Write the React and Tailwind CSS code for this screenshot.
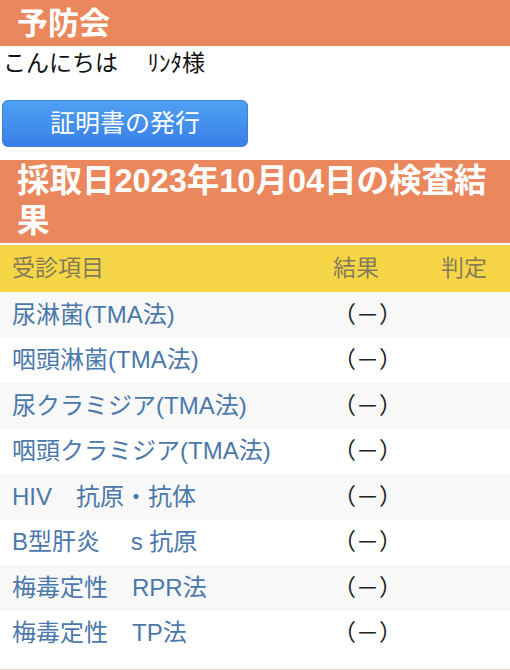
import React from "react";

const rows = [
  "尿淋菌(TMA法)",
  "咽頭淋菌(TMA法)",
  "尿クラミジア(TMA法)",
  "咽頭クラミジア(TMA法)",
  "HIV　抗原・抗体",
  "B型肝炎　 s 抗原",
  "梅毒定性　RPR法",
  "梅毒定性　TP法",
];

export default function App() {
  return (
    <div
      className="w-[510px] h-[670px] bg-white overflow-hidden flex flex-col"
      style={{ fontFamily: '"Liberation Sans", "Noto Sans CJK JP", sans-serif' }}
    >
      <div className="h-[46px] bg-[#eb875c] flex items-center pl-[17px] shrink-0">
        <span className="text-white font-bold text-[31px] leading-none">予防会</span>
      </div>
      <div className="pl-[3px] text-[23px] leading-[34px] text-[#111] whitespace-pre">
        {"こんにちは　 ﾘﾝﾀ様"}
      </div>
      <div className="mt-[20px] ml-[2px] w-[246px] h-[47px] rounded-[6px] border border-[#3d7fdc] bg-gradient-to-b from-[#4fa0f2] to-[#3a7fe9] flex items-center justify-center shrink-0">
        <span className="text-white text-[25px] leading-none">証明書の発行</span>
      </div>
      <div className="mt-[13px] bg-[#eb875c] pl-[17px] pt-[1px] pb-[2px] text-white font-bold text-[32.5px] leading-[40px] shrink-0 whitespace-nowrap">
        採取日2023年10月04日の検査結
        <br />果
      </div>
      <div className="mt-[2px] h-[47px] bg-[#f6d647] grid grid-cols-[321px_108px_1fr] items-center pl-[12px] text-[23px] text-[#857b57] shrink-0">
        <span>受診項目</span>
        <span>結果</span>
        <span>判定</span>
      </div>
      {rows.map((r, i) => (
        <div
          key={i}
          className={
            "h-[45.5px] grid grid-cols-[321px_108px_1fr] items-center pl-[12px] shrink-0 " +
            (i % 2 === 0 ? "bg-[#f8f8f8]" : "bg-white")
          }
        >
          <span className="text-[#4a78ab] text-[24px] whitespace-pre">{r}</span>
          <span className="text-[#222] text-[23px]">（－）</span>
          <span></span>
        </div>
      ))}
      <div className="flex-1" />
      <div className="h-[1px] bg-[#e8d3c2] shrink-0" />
    </div>
  );
}
